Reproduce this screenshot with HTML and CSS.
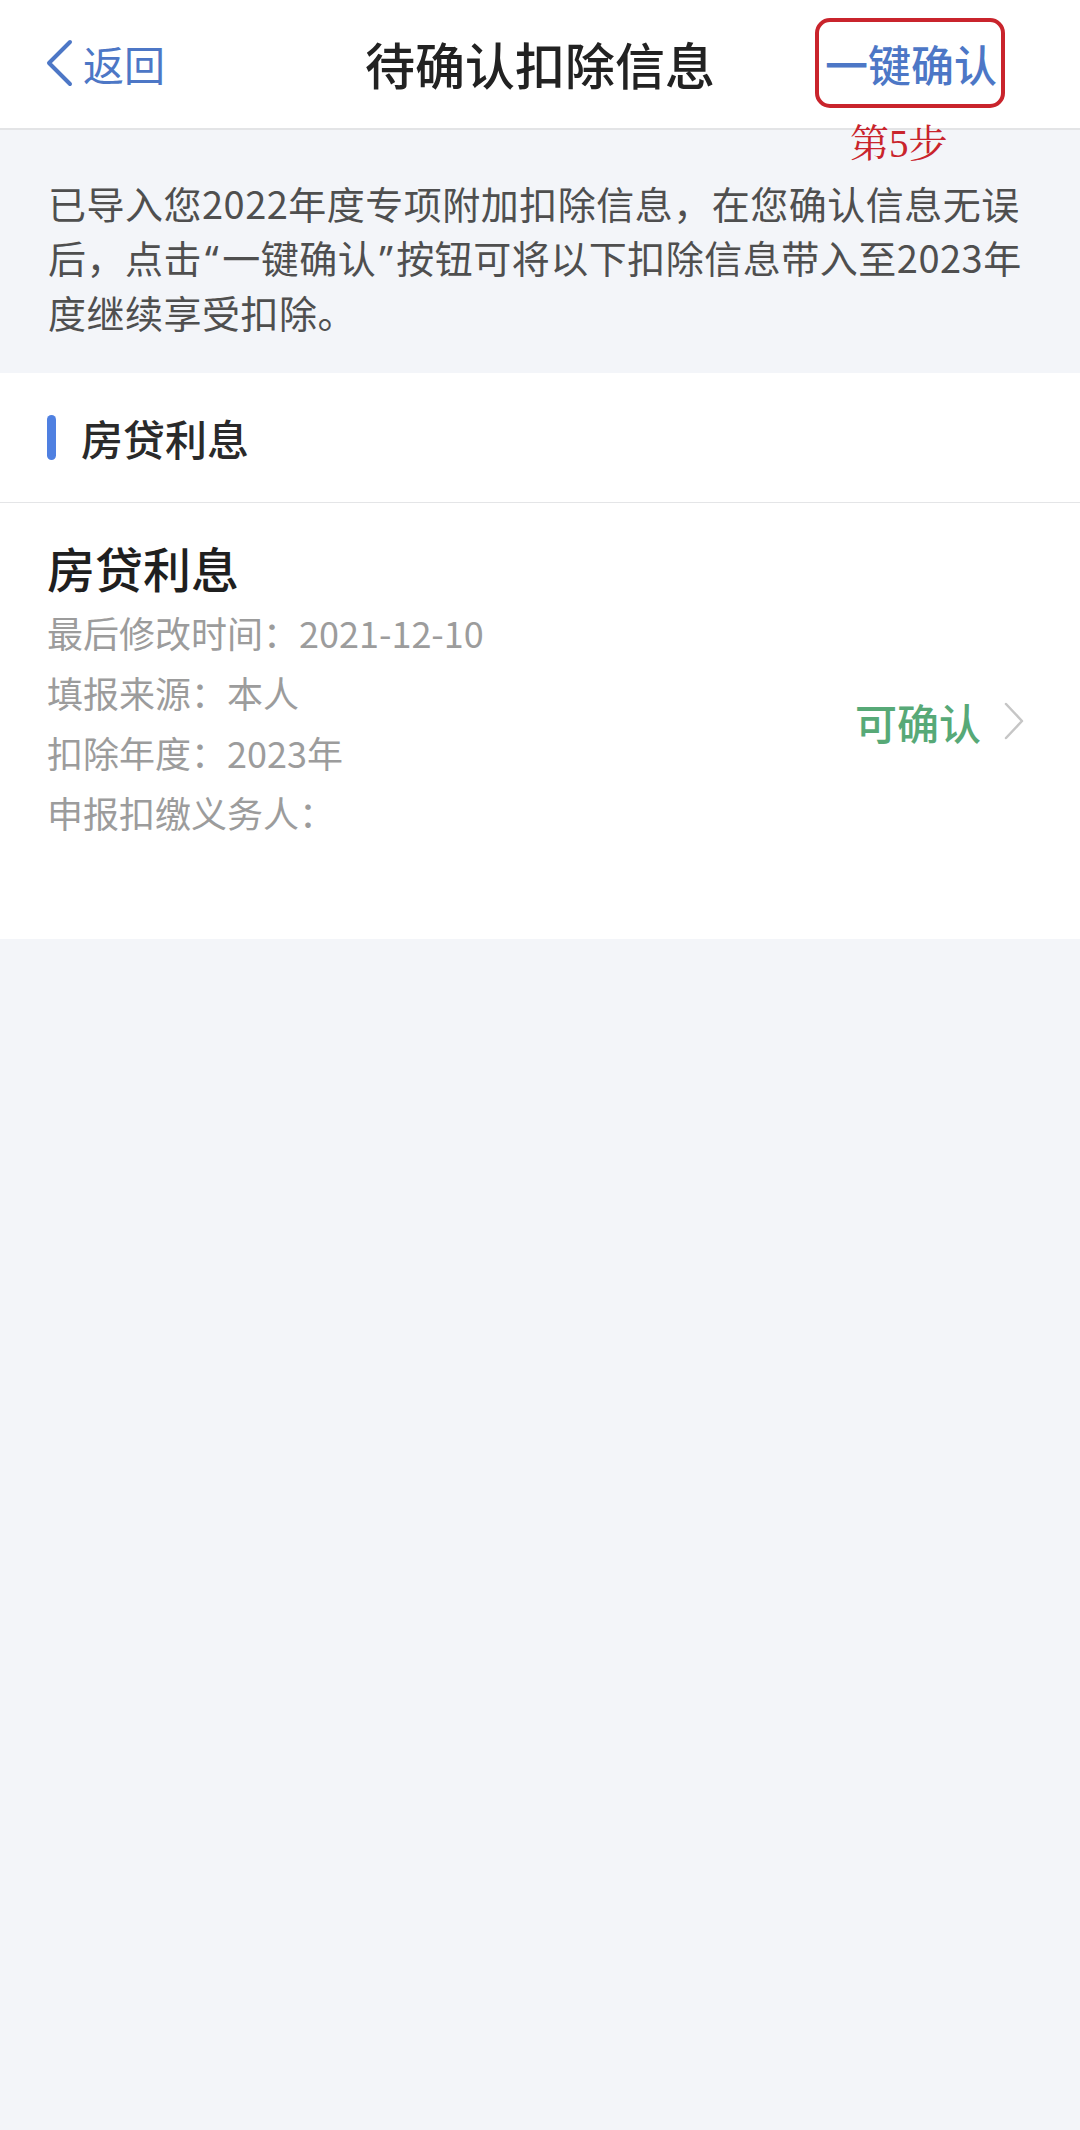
FILE: index.html
```html
<!DOCTYPE html>
<html lang="zh-CN">
<head>
  <meta charset="UTF-8">
  <meta name="viewport" content="width=device-width, initial-scale=1">
  <title>待确认扣除信息</title>
  <link rel="stylesheet" href="styles.css">
</head>
<body>
  <div class="nav">
    <a class="back" href="#">
      <svg class="back-icon" width="28" height="48" viewBox="0 0 28 48">
        <polyline points="25,3 4,24 25,45" fill="none" stroke="#4d77c6" stroke-width="4" stroke-linecap="round" stroke-linejoin="round"/>
      </svg>
      <span>返回</span>
    </a>
    <h1 class="title">待确认扣除信息</h1>
    <div class="confirm-all">
      <span>一键确认</span>
      <div class="mark-box"></div>
      <div class="mark-step">第5步</div>
    </div>
  </div>

  <div class="intro">
    已导入您2022年度专项附加扣除信息，在您确认信息无误<br>后，点击<span class="q">“</span>一键确认<span class="q">”</span>按钮可将以下扣除信息带入至2023年<br>度继续享受扣除。
  </div>

  <div class="section-head">
    <i class="bar"></i>
    <span>房贷利息</span>
  </div>

  <div class="item">
    <div class="item-info">
      <div class="item-title">房贷利息</div>
      <div class="item-line">最后修改时间：2021-12-10</div>
      <div class="item-line">填报来源：本人</div>
      <div class="item-line">扣除年度：2023年</div>
      <div class="item-line">申报扣缴义务人：</div>
    </div>
    <div class="item-status">
      <span>可确认</span>
      <svg width="22" height="40" viewBox="0 0 22 40">
        <polyline points="3,3 19,20 3,37" fill="none" stroke="#c6c6c6" stroke-width="2.5" stroke-linecap="round" stroke-linejoin="round"/>
      </svg>
    </div>
  </div>
</body>
</html>
```

FILE: styles.css
```css
*{
  padding: 0;
  margin: 0;
  box-sizing: border-box;
}
body{
  background: #f3f5f9;
  font-family: "Noto Sans CJK SC", "Noto Sans", sans-serif;
  color: #222;
  min-height: 100vh;
}
.nav{
  display: grid;
  grid-template-columns: 1fr auto 1fr;
  align-items: center;
  height: 130px;
  padding: 0 45px 2px;
  background: #fff;
  border-bottom: 2px solid #e3e4e6;
}
.back{
  display: flex;
  align-items: center;
  gap: 10px;
  color: #4d77c6;
  font-size: 41px;
  text-decoration: none;
  justify-self: start;
}
.title{
  font-size: 50px;
  font-weight: 500;
  color: #222;
}
.confirm-all{
  position: relative;
  justify-self: end;
  margin-right: 38px;
  font-size: 43px;
  font-weight: 500;
  color: #4d77c6;
}
.mark-box{
  position: absolute;
  left: -10px;
  right: -8px;
  top: -14px;
  height: 90px;
  border: 4px solid #c9242c;
  border-radius: 15px;
}
.mark-step{
  position: absolute;
  left: 25px;
  top: 80px;
  font-family: "Liberation Serif", "Noto Serif CJK SC", "Noto Sans CJK SC", serif;
  font-size: 39px;
  font-weight: 400;
  color: #c9242c;
  white-space: nowrap;
}
.intro{
  padding: 46px 20px 34px 48px;
  font-size: 38px;
  line-height: 54px;
  letter-spacing: 0.5px;
  color: #4f4f4f;
  white-space: nowrap;
}
.q{
  font-family: "Noto Sans", sans-serif;
  padding: 0 3px;
}
.section-head{
  display: flex;
  align-items: center;
  gap: 25px;
  height: 130px;
  padding: 0 47px;
  background: #fff;
  border-bottom: 1px solid #e4e5e7;
  font-size: 42px;
  font-weight: 500;
  color: #2a2a2a;
}
.bar{
  width: 9px;
  height: 45px;
  border-radius: 5px;
  background: #4f80e1;
}
.item{
  display: flex;
  align-items: center;
  justify-content: space-between;
  padding: 0 55px 0 47px;
  background: #fff;
}
.item-info{
  padding: 36px 0 97px;
}
.item-title{
  font-size: 48px;
  font-weight: 500;
  line-height: 56px;
  color: #1f1f1f;
  margin-bottom: 7px;
}
.item-line{
  font-size: 36px;
  line-height: 60px;
  color: #9c9c9c;
}
.item-status{
  display: flex;
  align-items: center;
  gap: 22px;
  font-size: 42px;
  font-weight: 500;
  color: #57a977;
}
```
